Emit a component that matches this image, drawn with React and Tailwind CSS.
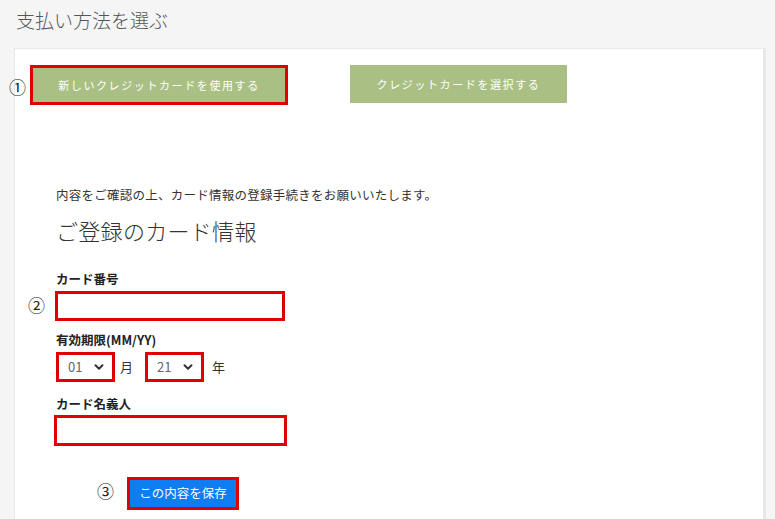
import { ChevronDown } from "lucide-react";

const jp = { fontFamily: '"Noto Sans CJK JP", "Noto Sans", sans-serif' };

function Select({ value }) {
  return (
    <div className="flex h-[30px] w-[59px] items-center justify-between border-[3px] border-[#e00000] bg-white pl-[9px] pr-[6px] text-[13px] text-[#666]">
      <span>{value}</span>
      <ChevronDown className="h-[14px] w-[14px] text-[#333]" strokeWidth={3.4} />
    </div>
  );
}

function Mark({ children, className }) {
  return (
    <span className={`absolute text-[17px] leading-none text-[#222] ${className}`}>{children}</span>
  );
}

export default function App() {
  return (
    <div className="relative h-[519px] w-[775px] overflow-hidden bg-[#f5f5f5] pl-[16px] pt-[4px]" style={jp}>
      <h1 className="text-[19px] font-light leading-[32px] text-[#555]">支払い方法を選ぶ</h1>

      <div className="ml-[-2px] mt-[12px] h-[480px] w-[752px] border border-r-[3px] border-[#e8e8e8] bg-white">
        <div className="mt-[16px] flex items-start pl-[15px]">
          <button className="h-[40px] w-[258px] border-[3px] border-[#e00000] bg-[#aabf84] text-[11px] tracking-[1.6px] text-white">
            新しいクレジットカードを使用する
          </button>
          <button className="ml-[62px] h-[38px] w-[217px] bg-[#aabf84] text-[11px] tracking-[1.6px] text-white">
            クレジットカードを選択する
          </button>
        </div>

        <div className="pl-[41px]">
          <p className="mt-[81px] text-[12.5px] tracking-[0.25px] leading-[18px] text-[#333]">
            内容をご確認の上、カード情報の登録手続きをお願いいたします。
          </p>
          <h2 className="mt-[11px] text-[22px] font-light tracking-[0.3px] leading-[30px] text-[#333]">ご登録のカード情報</h2>

          <label className="mt-[25px] block text-[12.5px] font-bold leading-[18px] text-[#222]">カード番号</label>
          <div className="ml-[-1px] mt-[3px] h-[30px] w-[230px] border-[3px] border-[#e00000] bg-white" />

          <label className="mt-[10px] block text-[12.5px] font-bold leading-[18px] text-[#222]">有効期限(MM/YY)</label>
          <div className="mt-[3px] flex items-center text-[13px] text-[#333]">
            <Select value="01" />
            <span className="ml-[5px]">月</span>
            <div className="ml-[12px]">
              <Select value="21" />
            </div>
            <span className="ml-[8px]">年</span>
          </div>

          <label className="mt-[13px] block text-[12.5px] font-bold leading-[18px] text-[#222]">カード名義人</label>
          <div className="ml-[-2px] mt-[2px] h-[31px] w-[233px] border-[3px] border-[#e00000] bg-white" />

          <button className="ml-[71px] mt-[31px] h-[33px] w-[112px] border-[3px] border-[#e00000] bg-[#0f7df2] text-[12.5px] text-white">
            この内容を保存
          </button>
        </div>
      </div>

      <Mark className="left-[9px] top-[78px]">①</Mark>
      <Mark className="left-[28px] top-[296px]">②</Mark>
      <Mark className="left-[97px] top-[482px]">③</Mark>
    </div>
  );
}
